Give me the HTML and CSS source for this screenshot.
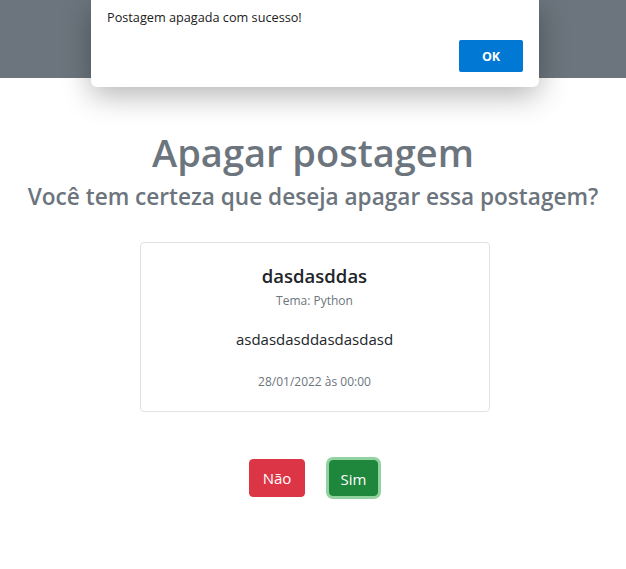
FILE: index.html
```html
<!DOCTYPE html>
<html lang="pt-BR">
<head>
<meta charset="utf-8">
<title>Apagar postagem</title>
<link rel="stylesheet" href="styles.css">
</head>
<body>
<header class="topbar"></header>
<main class="page">
  <h1 class="title">Apagar postagem</h1>
  <h3 class="subtitle">Você tem certeza que deseja apagar essa postagem?</h3>
  <div class="card">
    <h5 class="card-title">dasdasddas</h5>
    <p class="card-theme">Tema: Python</p>
    <p class="card-text">asdasdasddasdasdasd</p>
    <p class="card-date">28/01/2022 às 00:00</p>
  </div>
  <div class="actions">
    <button class="btn btn-danger">Não</button>
    <button class="btn btn-success focused">Sim</button>
  </div>
</main>
<div class="dialog">
  <p class="dialog-msg">Postagem apagada com sucesso!</p>
  <div class="dialog-actions"><button class="dialog-ok">OK</button></div>
</div>
</body>
</html>
```
FILE: styles.css
```css
* { box-sizing: border-box; }
html, body { margin: 0; padding: 0; }
body {
  font-family: "Open Sans", "Noto Sans", sans-serif;
  color: #212529;
  background: #fff;
  width: 626px;
  height: 569px;
  overflow: hidden;
  position: relative;
}
.topbar {
  height: 78px;
  background: #6c757d;
}
.page {
  display: flex;
  flex-direction: column;
  align-items: center;
}
.title {
  margin: 50px 0 0;
  font-size: 38px;
  font-weight: 600;
  line-height: 48px;
  color: #6c757d;
}
.subtitle {
  margin: 5px 0 0;
  font-size: 22.6px;
  font-weight: 600;
  line-height: 32px;
  color: #6c757d;
}
.card {
  margin: 29px 0 0 3px;
  width: 350px;
  height: 170px;
  border: 1px solid #dfe2e6;
  border-radius: 4px;
  display: flex;
  flex-direction: column;
  align-items: center;
  padding-top: 19px;
}
.card-title {
  margin: 0;
  font-size: 18.5px;
  font-weight: 600;
  line-height: 28px;
  color: #212529;
}
.card-theme {
  margin: 2px 0 0;
  font-size: 12px;
  line-height: 18px;
  color: #6c757d;
}
.card-text {
  margin: 17px 0 0;
  font-size: 15px;
  line-height: 24px;
  color: #212529;
}
.card-date {
  margin: 22px 0 0;
  font-size: 12px;
  line-height: 18px;
  color: #6c757d;
}
.actions {
  margin-top: 47px;
  display: flex;
  gap: 22px;
  align-items: center;
}
.btn {
  font-family: inherit;
  font-size: 15px;
  line-height: 24px;
  color: #fff;
  border: 1px solid transparent;
  border-radius: 4px;
  padding: 6px 8px;
  height: 38px;
}
.btn-danger { background: #dc3545; border-color: #dc3545; width: 56px; margin-left: 1px; }
.btn-success { background: #1e873b; border-color: #1e873b; width: 49px; height: 36px; margin-left: 2px; }
.focused { box-shadow: 0 0 0 3px #92d2a1; }
.dialog {
  position: absolute;
  left: 91px;
  top: 0;
  width: 448px;
  height: 87px;
  background: #fff;
  border-radius: 0 0 6px 6px;
  box-shadow: 0 8px 30px rgba(0,0,0,0.3);
  padding: 9px 16px 0;
}
.dialog-msg {
  margin: 0;
  font-size: 12.7px;
  line-height: 17px;
  color: #202020;
}
.dialog-actions {
  display: flex;
  justify-content: flex-end;
  margin-top: 14px;
}
.dialog-ok {
  width: 64px;
  height: 32px;
  background: #0078d4;
  color: #fff;
  border: none;
  border-radius: 2px;
  font-family: inherit;
  font-size: 12.5px;
  font-weight: 700;
}
```
